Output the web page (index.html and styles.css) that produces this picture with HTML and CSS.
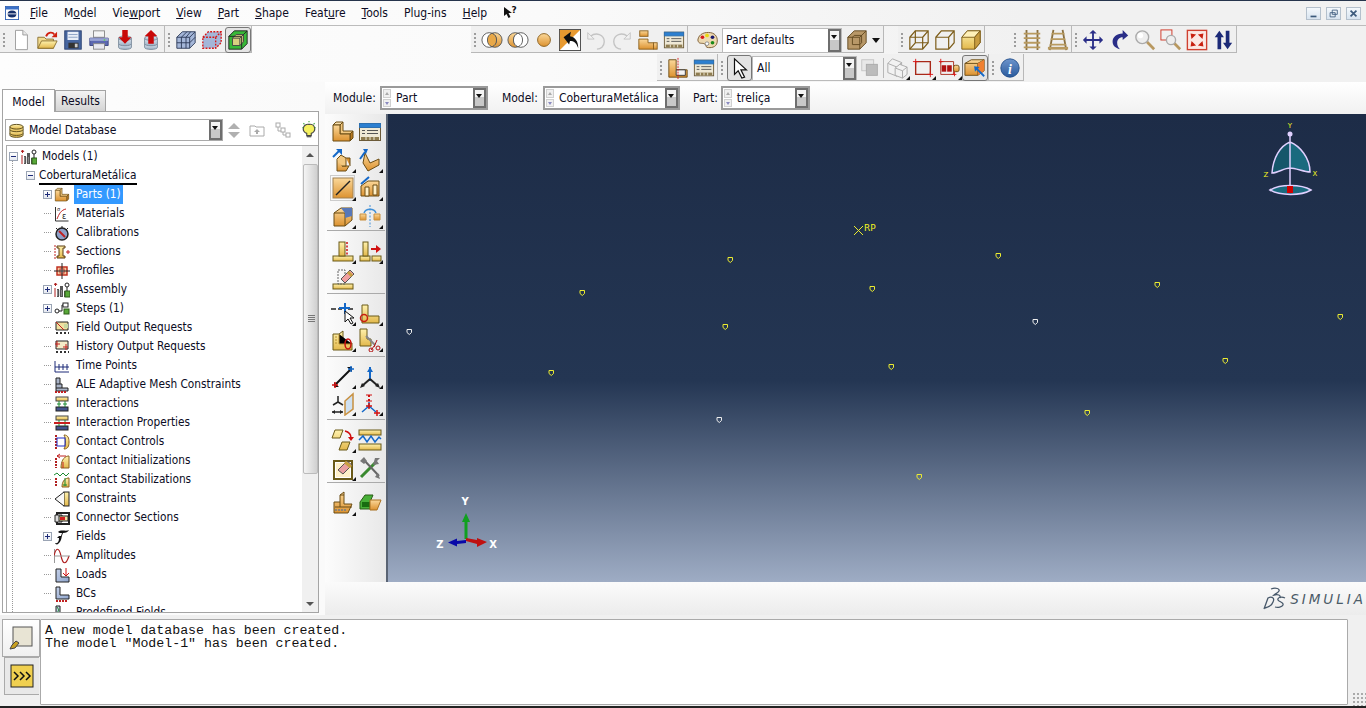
FILE: index.html
```html
<!DOCTYPE html>
<html lang="en">
<head>
<meta charset="utf-8">
<title>Abaqus/CAE</title>
<link rel="stylesheet" href="styles.css">
</head>
<body>
<svg class="defs" aria-hidden="true">
  <defs>
    <linearGradient id="o" x1="0" y1="0" x2="0" y2="1"><stop offset="0" stop-color="#fbd89a"/><stop offset="1" stop-color="#dc9230"/></linearGradient>
    <linearGradient id="y" x1="0" y1="0" x2="0" y2="1"><stop offset="0" stop-color="#fff2ae"/><stop offset="1" stop-color="#e2b84c"/></linearGradient>
    <linearGradient id="b" x1="0" y1="0" x2="1" y2="1"><stop offset="0" stop-color="#c6d2ea"/><stop offset="1" stop-color="#8ea4cc"/></linearGradient>
    <linearGradient id="c" x1="0" y1="0" x2="0" y2="1"><stop offset="0" stop-color="#e4ecf4"/><stop offset="1" stop-color="#9cb0c4"/></linearGradient>
    <linearGradient id="info" x1="0" y1="0" x2="0" y2="1"><stop offset="0" stop-color="#6c94cc"/><stop offset="1" stop-color="#2a5a9c"/></linearGradient>
    <symbol id="part" viewBox="0 0 24 24"><g stroke="#6a4c14" stroke-width="1" stroke-linejoin="round"><path d="M2 5l3-3h7l-3 3z" fill="#fbe3b0"/><path d="M9 5l3-3v9h10l-3 3H9z" fill="#f2c880"/><path d="M19 14l3-3v7l-3 3z" fill="#b87a24"/><path d="M2 5h7v9h10v7H2z" fill="url(#o)"/></g></symbol>
    <symbol id="table" viewBox="0 0 24 24"><rect x="1.500" y="3.500" width="21" height="17" fill="#efe9d6" stroke="#6b5a38"/><rect x="1.500" y="3.500" width="21" height="4" fill="#2c7fd0" stroke="#2c6fb0"/><path d="M4 10.500h3M9 10.500h11M4 13.500h3M9 13.500h11" stroke="#555"/><path d="M3 17h18v3H3z" fill="#8e7c50"/><path d="M8 17v3M12 17v3M16 17v3" stroke="#efe9d6"/></symbol>
    <symbol id="stack" viewBox="0 0 24 24"><g stroke="#7a8a9a" fill="url(#c)"><path d="M5 16v4c0 3 14 3 14 0v-4z"/><path d="M5 10v6c0 3 14 3 14 0v-6z"/><ellipse cx="12" cy="10" rx="7" ry="2.500"/></g></symbol>
    <symbol id="assy" viewBox="0 0 16 16"><path d="M1 6v9" stroke="#b02020"/><path d="M1.500 4l0-3M0 3l1.500-2 1.500 2" stroke="#b02020" fill="none"/><path d="M3 7h2v8H3zM6 4h3v11H6zM10 9h1v6h-1z" fill="#555"/><path d="M3 9h6M3 11h6M3 13h6" stroke="#bbb" stroke-dasharray="1 1"/><rect x="11" y="9" width="5" height="6" fill="#58a838" stroke="#2c5c18"/><circle cx="13" cy="3" r="2" fill="#fff" stroke="#222"/><path d="M13 5v4" stroke="#222"/></symbol>
    <path id="pin" d="M-2-1.500h4.500v3L.3 3.500-2 1.500z"/>
  </defs>
</svg>

<header class="menubar">
  <svg class="appicon" viewBox="0 0 16 16"><rect x=".5" y=".5" width="15" height="15" fill="#fff" stroke="#2a5cb0"/><rect x="1" y="1" width="14" height="3" fill="#3a70c8"/><ellipse cx="8" cy="9" rx="5" ry="4" fill="#16306c"/><path d="M3 9h10" stroke="#fff"/></svg>
  <nav class="menu">
    <span><u>F</u>ile</span><span>M<u>o</u>del</span><span>Vie<u>w</u>port</span><span><u>V</u>iew</span><span><u>P</u>art</span><span><u>S</u>hape</span><span>Feat<u>u</u>re</span><span><u>T</u>ools</span><span>Plu<u>g</u>-ins</span><span><u>H</u>elp</span>
  </nav>
  <svg class="whats" viewBox="0 0 14 14"><path d="M1 1v9l2.500-2L5.500 12l2-1-2-4H9z" fill="#111"/><text x="8.500" y="7" class="whats-q">?</text></svg>
  <div class="winbtns">
    <span class="winbtn"><svg viewBox="0 0 15 13"><rect x="4" y="9" width="7" height="2" fill="#3c5a7c"/></svg></span>
    <span class="winbtn"><svg viewBox="0 0 15 13"><path d="M6 2.500h6v5H6zM3.500 5.500h6v5h-6z" fill="none" stroke="#3c5a7c"/></svg></span>
    <span class="winbtn"><svg viewBox="0 0 15 13"><path d="M4 3l7 7M11 3l-7 7" stroke="#3c5a7c" stroke-width="2"/></svg></span>
  </div>
</header>

<section class="toolrow">
  <div class="tb">
    <span class="grip"></span>
    <span class="ic"><svg viewBox="0 0 24 24"><path d="M6 1.500h8l5 5v16H6z" fill="#fff" stroke="#999"/><path d="M14 1.500v5h5" fill="#e8e8e8" stroke="#999"/></svg></span>
    <span class="ic"><svg viewBox="0 0 24 24"><path d="M2 21V9h7l2 2h8v10z" fill="#f2dc90" stroke="#8a7030"/><path d="M2 21l4-8h17l-4 8z" fill="url(#y)" stroke="#8a7030"/><path d="M11 8c2-5 7-5 9-2" fill="none" stroke="#d02010" stroke-width="2"/><path d="M23 3v6h-6z" fill="#d02010"/></svg></span>
    <span class="ic"><svg viewBox="0 0 24 24"><rect x="3" y="2" width="18" height="20" fill="#46659e" stroke="#2a4070"/><rect x="6" y="3" width="12" height="9" fill="#e8eef8"/><path d="M7 6h10M7 9h10" stroke="#8aa0c4"/><rect x="7" y="15" width="11" height="6" fill="#333"/><rect x="14" y="16" width="3" height="4" fill="#ccc"/></svg></span>
    <span class="ic"><svg viewBox="0 0 24 24"><rect x="6" y="2" width="12" height="7" fill="#f4f4f4" stroke="#888"/><path d="M2 10h20v8H2z" fill="#5c68b0" stroke="#3a4480"/><path d="M2 10h20v3H2z" fill="#9aa4d4"/><rect x="6" y="16" width="12" height="6" fill="#e8e8f0" stroke="#888"/><circle cx="18" cy="12" r="1" fill="#6c6"/></svg></span>
    <span class="ic"><svg viewBox="0 0 24 24"><use href="#stack"/><path d="M9 1h6v8h4l-7 7-7-7h4z" fill="#c80808"/></svg></span>
    <span class="ic"><svg viewBox="0 0 24 24"><use href="#stack"/><path d="M12 1l7 7h-4v8H9V8H5z" fill="#c80808"/></svg></span>
  </div>
  <div class="tb">
    <span class="grip"></span>
    <span class="ic"><svg viewBox="0 0 24 24"><path d="M2 9l6-6h14v12l-6 6H2z" fill="#a4b6d8" stroke="#2c3a58"/><path d="M2 9h14v12M16 9l6-6M7 9v12M12 9v12M2 15h14M7 9l6-6M12 9l5-6M16 15l6-6" fill="none" stroke="#2c3a58"/></svg></span>
    <span class="ic"><svg viewBox="0 0 24 24"><path d="M2 9l6-6h14v12l-6 6H2z" fill="#a4b6d8"/><path d="M2 9h14v12H2zM2 9l6-6h14v12l-6 6M16 9l6-6" fill="none" stroke="#d81818" stroke-width="1.500" stroke-dasharray="2 1.500"/></svg></span>
    <span class="ic on"><svg viewBox="0 0 24 24"><path d="M2 8l6-6h14v14l-6 6H2z" fill="#38b838" stroke="#222"/><path d="M6 10l4-4h8v8l-4 4H6z" fill="#d8d080" stroke="#444"/><path d="M2 8h14v14M16 8l6-6" fill="none" stroke="#222"/><path d="M6 10h8v8M14 10l4-4" fill="none" stroke="#444"/></svg></span>
  </div>
  <div class="tb tb-mid">
    <span class="grip"></span>
    <span class="ic"><svg viewBox="0 0 24 24"><circle cx="15" cy="12" r="8" fill="url(#o)" stroke="#555"/><circle cx="9" cy="12" r="8" fill="#fff" stroke="#555"/><path d="M12 4.600a8 8 0 0 1 0 14.800a8 8 0 0 1 0-14.800z" fill="#e8a848" stroke="#555"/></svg></span>
    <span class="ic"><svg viewBox="0 0 24 24"><circle cx="9" cy="12" r="8" fill="url(#o)" stroke="#555"/><circle cx="15" cy="12" r="8" fill="#fff" stroke="#555" fill-opacity=".9"/><path d="M12 4.600a8 8 0 0 1 0 14.800a8 8 0 0 1 0-14.800z" fill="#fff" stroke="#555"/></svg></span>
    <span class="ic"><svg viewBox="0 0 24 24"><circle cx="12" cy="12" r="7" fill="url(#o)" stroke="#8a6020"/></svg></span>
    <span class="ic"><svg viewBox="0 0 24 24"><rect x="0.500" y="0.500" width="23" height="23" fill="#fff" stroke="#444"/><path d="M1 23V21L21 1h2z" fill="none"/><path d="M1 1h22L1 23z" fill="#e89a30"/><path d="M5 9l8-6-1 5c6 1 9 6 9 13-2-6-5-8-9-8l-1 4z" fill="#111"/></svg></span>
    <span class="ic"><svg viewBox="0 0 24 24"><path d="M6 8c6-5 15-2 15 6 0 5-4 8-8 8" fill="none" stroke="#c4c4c4" stroke-width="1.500"/><path d="M3 4v7h7z" fill="#f0f0f0" stroke="#c4c4c4"/></svg></span>
    <span class="ic"><svg viewBox="0 0 24 24"><path d="M18 8c-6-5-15-2-15 6 0 5 4 8 8 8" fill="none" stroke="#c4c4c4" stroke-width="1.500"/><path d="M21 4v7h-7z" fill="#f0f0f0" stroke="#c4c4c4"/></svg></span>
    <span class="ic"><svg viewBox="0 0 24 24"><rect x="3" y="2" width="9" height="6" fill="url(#o)" stroke="#8a6020"/><path d="M2 11h10v4h6v7H2z" fill="url(#o)" stroke="#8a6020"/><rect x="18" y="15" width="4" height="7" fill="url(#o)" stroke="#8a6020"/></svg></span>
    <span class="ic"><svg viewBox="0 0 24 24"><use href="#table"/></svg></span>
    <span class="sep"></span>
    <span class="ic ic-wide"><svg viewBox="0 0 24 24"><path d="M2 12C3 5 10 3 16 4c6 1 8 6 7 11-1 5-7 6-11 5-2-1-1-3-3-4-3-1-6 1-7-4z" fill="#ecd8b0" stroke="#7a5a30"/><circle cx="7" cy="9" r="2" fill="#d81818"/><circle cx="12" cy="7" r="2" fill="#e8d810"/><circle cx="18" cy="9" r="2" fill="#18186c"/><circle cx="18" cy="15" r="2" fill="#1a8a1a"/><circle cx="12" cy="16" r="2" fill="#fff" stroke="#888"/></svg></span>
    <div class="combo c-defaults"><span class="val">Part defaults</span><span class="drop"></span></div>
    <span class="ic ic-cube"><svg viewBox="0 0 24 24"><path d="M2 9l7-7h13v13l-7 7H2z" fill="#b89868" stroke="#604820"/><path d="M2 9h13v13M15 9l7-7M7 9l2-2h8v8l-2 2H7z" fill="none" stroke="#604820"/></svg></span>
    <span class="ddarrow"></span>
  </div>
  <div class="tb tb-r1">
    <span class="grip"></span>
    <span class="ic"><svg viewBox="0 0 24 24"><g fill="none" stroke="#7c5c18" stroke-width="1.300"><path d="M2 9l6-7h14v13l-6 7H2zM2 9h14v13M16 9l6-7"/><path d="M2 22l6-7h14M8 2v13"/></g></svg></span>
    <span class="ic"><svg viewBox="0 0 24 24"><g fill="none" stroke="#7c5c18" stroke-width="1.300"><path d="M2 9l6-7h14v13l-6 7H2zM2 9h14v13M16 9l6-7"/></g></svg></span>
    <span class="ic"><svg viewBox="0 0 24 24"><path d="M2 9l6-7h14v13l-6 7H2z" fill="url(#y)" stroke="#7c5c18"/><path d="M2 9l6-7h14l-6 7z" fill="#fff0b8" stroke="#7c5c18"/><path d="M16 9l6-7v13l-6 7z" fill="#c89c40" stroke="#7c5c18"/></svg></span>
  </div>
  <div class="tb tb-r2">
    <span class="grip"></span>
    <span class="ic"><svg viewBox="0 0 24 24"><path d="M6 1v22M18 1v22" stroke="#8a7040" stroke-width="2"/><path d="M3 5h18M3 10h18M3 15h18M3 20h18" stroke="#b89a60" stroke-width="2"/></svg></span>
    <span class="ic"><svg viewBox="0 0 24 24"><path d="M7 1L3 23M17 1l4 22" stroke="#8a7040" stroke-width="2"/><path d="M5 5h14M4 11h16M3 17h18" stroke="#b89a60" stroke-width="2"/><path d="M1 21h22" stroke="#b89a60" stroke-width="3"/></svg></span>
    <span class="sep"></span>
    <span class="grip"></span>
    <span class="ic"><svg viewBox="0 0 24 24"><path d="M12 1l4 4h-3v6h6V8l4 4-4 4v-3h-6v6h3l-4 4-4-4h3v-6H5v3l-4-4 4-4v3h6V5H8z" fill="#2a2e88"/></svg></span>
    <span class="ic"><svg viewBox="0 0 24 24"><path d="M16 1l6 6-6 5V9c-4 0-6 3-6 6 0 3 1 5 3 7-5-1-8-4-8-8 0-5 4-9 11-9z" fill="#2a2e88"/></svg></span>
    <span class="ic"><svg viewBox="0 0 24 24"><path d="M14 14l8 8" stroke="#b89860" stroke-width="3"/><circle cx="9" cy="9" r="7" fill="#eee" stroke="#aaa" stroke-width="1.500"/><circle cx="7" cy="7" r="3" fill="#fff"/></svg></span>
    <span class="ic"><svg viewBox="0 0 24 24"><rect x="1" y="1" width="12" height="11" fill="none" stroke="#d03020"/><path d="M15 15l7 7" stroke="#b89860" stroke-width="3"/><circle cx="12" cy="12" r="5" fill="#eee" stroke="#aaa" stroke-width="1.500"/></svg></span>
    <span class="ic"><svg viewBox="0 0 24 24"><rect x="1.500" y="1.500" width="21" height="21" fill="#fbe8e4" stroke="#d04030" stroke-width="1.500"/><path d="M5 5l6 1-5 5zM19 5l-6 1 5 5zM5 19l6-1-5-5zM19 19l-6-1 5-5z" fill="#c82010"/></svg></span>
    <span class="ic"><svg viewBox="0 0 24 24"><path d="M8 2l5 7h-3v13H6V9H3z" fill="#1c2a78"/><path d="M17 22l-5-7h3V2h4v13h3z" fill="#1c2a78"/></svg></span>
  </div>
</section>

<section class="toolrow row2">
  <div class="tb">
    <span class="grip"></span>
    <span class="ic"><svg viewBox="0 0 24 24"><path d="M2 3h8v11h12v8H2z" fill="url(#o)" stroke="#6a4c14"/><path d="M10 14h10v6H10z" fill="#f4f4f4" stroke="#333"/><path d="M12 1v23" stroke="#d81818" stroke-dasharray="2 1"/></svg></span>
    <span class="ic"><svg viewBox="0 0 24 24"><use href="#table"/></svg></span>
  </div>
  <div class="tb">
    <span class="grip"></span>
    <span class="ic on ic-sel"><svg viewBox="0 0 24 24"><path d="M6 2v17l4-4 4 8 3-1-4-8h6z" fill="#fff" stroke="#111" stroke-width="1.300"/></svg></span>
    <div class="combo c-all"><span class="val">All</span><span class="drop"></span></div>
    <span class="ic ic-copy"><svg viewBox="0 0 24 24"><rect x="3" y="3" width="13" height="12" fill="#e8e8e8" stroke="#c4c4c4"/><rect x="8" y="8" width="12" height="12" fill="#bcbcbc" stroke="#aaa"/></svg></span>
    <span class="sep sep-in"></span>
    <span class="ic fly"><svg viewBox="0 0 24 24"><g fill="#f2f2f2" stroke="#a8a8a8"><path d="M2 7l5-5 10 4v10l-5 5-10-4z"/><path d="M2 7l10 4v10M12 11l5-5"/><path d="M10 12l5-4 8 3v8l-5 4-8-3z"/><path d="M10 12l8 3v8M18 15l5-4"/></g></svg></span>
    <span class="ic fly"><svg viewBox="0 0 24 24"><path d="M4 5h16v14H4z" fill="none" stroke="#a82818" stroke-width="1.500"/><path d="M1 5h6M4 2v6M20 16v6M17 19h6" stroke="#d81818"/></svg></span>
    <span class="ic fly"><svg viewBox="0 0 24 24"><path d="M3 5h14v14H3z" fill="none" stroke="#a82818"/><rect x="4" y="9" width="5" height="7" fill="#b01010"/><rect x="10" y="9" width="5" height="7" fill="#b01010"/><rect x="17" y="9" width="6" height="7" rx="2" fill="url(#o)" stroke="#6a4c14"/><path d="M1 5h5M3 2v5M15 19h5M18 16v5" stroke="#d81818"/></svg></span>
    <span class="ic on ic-box"><svg viewBox="0 0 24 24"><path d="M1 7l7-4h14v12l-7 5H1z" fill="url(#o)" stroke="#6a4c14"/><path d="M1 7h14v13M15 7l7-4" fill="none" stroke="#6a4c14"/><path d="M15 7l7-4v12l-7 5z" fill="#f08030"/><path d="M22 21l-8-8" stroke="#1468c8" stroke-width="2"/><path d="M11 10l6 1-5 5z" fill="#1468c8"/></svg></span>
  </div>
  <div class="tb">
    <span class="grip"></span>
    <span class="ic"><svg viewBox="0 0 24 24"><circle cx="12" cy="12" r="10" fill="url(#info)" stroke="#24508c"/><text x="12" y="18" class="info-i">i</text></svg></span>
  </div>
</section>

<main class="main">
  <aside class="leftpane">
    <div class="tabs"><span class="tab active">Model</span><span class="tab">Results</span></div>
    <div class="panel">
      <div class="dbrow">
        <div class="combo c-db">
          <svg class="dbicon" viewBox="0 0 16 16"><g stroke="#5a4a18" fill="url(#y)"><path d="M1 11v2c0 3 14 3 14 0v-2z"/><path d="M1 7v4c0 3 14 3 14 0V7z"/><path d="M1 4v3c0 3 14 3 14 0V4z"/><ellipse cx="8" cy="4" rx="7" ry="2.500"/></g></svg>
          <span class="val">Model Database</span><span class="drop"></span>
        </div>
        <span class="updown"><i class="up"></i><i class="down"></i></span>
        <svg class="dbtool" viewBox="0 0 16 16"><path d="M1 4h5l1 1h8v9H1z" fill="none" stroke="#aaa"/><path d="M8 7l3 3H9v2H7v-2H5z" fill="#aaa"/></svg>
        <svg class="dbtool" viewBox="0 0 16 16"><g fill="#fff" stroke="#aaa"><rect x="1" y="1" width="4" height="4"/><rect x="6" y="6" width="4" height="4"/><rect x="11" y="11" width="4" height="4"/></g><path d="M3 5v4h3M8 10v3h3" fill="none" stroke="#aaa"/></svg>
        <svg class="dbtool bulb" viewBox="0 0 16 16"><path d="M8 3a4 4 0 0 0-2 8v2h4v-2a4 4 0 0 0-2-8z" fill="#f4f060" stroke="#444"/><path d="M6 14h4" stroke="#444"/><path d="M2 6h1M13 6h1M3 2l1 1M13 2l-1 1M8 0v1" stroke="#4a4"/></svg>
      </div>
      <div class="treebox">
        <div class="tree">
          <div class="row r0"><span class="exp minus"></span><svg class="ti" viewBox="0 0 16 16"><use href="#assy"/></svg><span class="lbl">Models (1)</span></div>
          <div class="row r1"><span class="exp minus"></span><span class="lbl cur">CoberturaMetálica</span></div>
          <div class="row r2"><span class="exp plus"></span><svg class="ti" viewBox="0 0 24 24"><use href="#part"/></svg><span class="lbl sel">Parts (1)</span></div>
          <div class="row r2"><span class="stub"></span><svg class="ti" viewBox="0 0 16 16"><path d="M1.500 1v14h13" fill="none" stroke="#333"/><path d="M3 13C5 8 7 4 12 3" fill="none" stroke="#c02020"/><text x="8" y="13" class="eps">ε</text><text x="3" y="5" class="sig">σ</text></svg><span class="lbl">Materials</span></div>
          <div class="row r2"><span class="stub"></span><svg class="ti" viewBox="0 0 16 16"><circle cx="8" cy="9" r="6" fill="#8ea0c8" stroke="#222" stroke-width="1.500"/><path d="M5 6l6 6" stroke="#c02020" stroke-width="2"/><path d="M8 1v2M2 3l2 2M14 3l-2 2" stroke="#222"/></svg><span class="lbl">Calibrations</span></div>
          <div class="row r2"><span class="stub"></span><svg class="ti" viewBox="0 0 16 16"><path d="M3 2h8v2H9v8h2v2H3v-2h2V4H3z" fill="url(#y)" stroke="#5a3a10"/><path d="M1 1v14" stroke="#c02020" stroke-dasharray="2 1"/><path d="M12 8h4M14 6v4" stroke="#c02020"/></svg><span class="lbl">Sections</span></div>
          <div class="row r2"><span class="stub"></span><svg class="ti" viewBox="0 0 16 16"><rect x="3" y="4" width="10" height="8" fill="#f4c8a0" stroke="#c03020" stroke-width="1.500"/><rect x="6" y="6" width="4" height="4" fill="#fff" stroke="#c03020"/><path d="M8 0v16M0 8h16" stroke="#222"/></svg><span class="lbl">Profiles</span></div>
          <div class="row r2"><span class="exp plus"></span><svg class="ti" viewBox="0 0 16 16"><use href="#assy"/></svg><span class="lbl">Assembly</span></div>
          <div class="row r2"><span class="exp plus"></span><svg class="ti" viewBox="0 0 16 16"><circle cx="3" cy="10" r="2" fill="#fff" stroke="#222"/><path d="M5 10h3V4h2" fill="none" stroke="#222"/><rect x="9" y="2" width="5" height="4" fill="#fff" stroke="#222"/><rect x="10" y="8" width="5" height="5" fill="#58a838" stroke="#2c5c18"/></svg><span class="lbl">Steps (1)</span></div>
          <div class="row r2"><span class="stub"></span><svg class="ti" viewBox="0 0 16 16"><path d="M2 2h12v8H2z" fill="#f0e0a0" stroke="#222"/><path d="M2 2l8 8" stroke="#c02020"/><path d="M10 4h4v4h-4z" fill="#c8d8a0"/><path d="M2 13h2M6 13h2M10 13h2M14 13h1" stroke="#333" stroke-width="2"/></svg><span class="lbl">Field Output Requests</span></div>
          <div class="row r2"><span class="stub"></span><svg class="ti" viewBox="0 0 16 16"><path d="M2 2h12v8H2z" fill="#f4ecc8" stroke="#222"/><path d="M1 5h5M3 2v6M9 8h5M12 5v6" stroke="#c02020"/><path d="M2 13h2M6 13h2M10 13h2M14 13h1" stroke="#333" stroke-width="2"/></svg><span class="lbl">History Output Requests</span></div>
          <div class="row r2"><span class="stub"></span><svg class="ti" viewBox="0 0 16 16"><path d="M1 3v11h14M1 9h14M5 6v6M9 6v6M13 6v6" fill="none" stroke="#1c2a78"/></svg><span class="lbl">Time Points</span></div>
          <div class="row r2"><span class="stub"></span><svg class="ti" viewBox="0 0 16 16"><path d="M2 1h4v6h2v4h6v3H2z" fill="#aab4c8" stroke="#222"/><path d="M2 7h4M8 11H2" stroke="#222"/><path d="M1 15h12" stroke="#c02020" stroke-dasharray="2 1" stroke-width="2"/></svg><span class="lbl">ALE Adaptive Mesh Constraints</span></div>
          <div class="row r2"><span class="stub"></span><svg class="ti" viewBox="0 0 16 16"><rect x="2" y="1" width="12" height="4" fill="url(#y)" stroke="#444"/><rect x="2" y="11" width="12" height="4" fill="#44548c" stroke="#222"/><path d="M5 5v6M11 5v6M3 8h4M9 8h4" stroke="#1a8a30"/></svg><span class="lbl">Interactions</span></div>
          <div class="row r2"><span class="stub"></span><svg class="ti" viewBox="0 0 16 16"><rect x="2" y="1" width="12" height="4" fill="url(#y)" stroke="#444"/><rect x="2" y="11" width="12" height="4" fill="#44548c" stroke="#222"/><path d="M5 5v6M11 5v6" stroke="#1a8a30"/><path d="M0 8h16" stroke="#c82020" stroke-width="2"/></svg><span class="lbl">Interaction Properties</span></div>
          <div class="row r2"><span class="stub"></span><svg class="ti" viewBox="0 0 16 16"><path d="M10 1c4 0 5 3 5 7s-1 7-5 7c2-4 2-10 0-14z" fill="url(#y)" stroke="#8a6020"/><path d="M2 1v14" stroke="#b02020" stroke-dasharray="2 1" stroke-width="2"/><rect x="3" y="4" width="8" height="8" fill="none" stroke="#2030c8"/></svg><span class="lbl">Contact Controls</span></div>
          <div class="row r2"><span class="stub"></span><svg class="ti" viewBox="0 0 16 16"><path d="M14 3c-5 1-7 6-7 12h8V3z" fill="url(#y)" stroke="#8a6020"/><path d="M2 5v10" stroke="#b02020" stroke-dasharray="2 1" stroke-width="2"/><path d="M9 9v6" stroke="#c02020"/><path d="M3 3h9M3 3l3-2M3 3l3 2" stroke="#c02020"/></svg><span class="lbl">Contact Initializations</span></div>
          <div class="row r2"><span class="stub"></span><svg class="ti" viewBox="0 0 16 16"><path d="M14 6c-4 1-6 4-6 9h7V6z" fill="url(#y)" stroke="#8a6020"/><path d="M2 6v9" stroke="#b02020" stroke-dasharray="2 1" stroke-width="2"/><path d="M0 3l3-2 3 3 3-3 3 3 3-3" fill="none" stroke="#1a8a30"/><path d="M11 6v8M9 13h4" stroke="#1a8a30"/></svg><span class="lbl">Contact Stabilizations</span></div>
          <div class="row r2"><span class="stub"></span><svg class="ti" viewBox="0 0 16 16"><rect x="10" y="1" width="5" height="14" fill="url(#y)" stroke="#222"/><path d="M10 1L1 8l9 7" fill="#f8f8f8" stroke="#222"/></svg><span class="lbl">Constraints</span></div>
          <div class="row r2"><span class="stub"></span><svg class="ti" viewBox="0 0 16 16"><path d="M3 3h12v11H3z" fill="none" stroke="#222" stroke-width="2"/><path d="M1 5v7h7V5z" fill="#ddd" stroke="#222"/><rect x="5" y="6" width="9" height="5" fill="#f0e0a0" stroke="#222"/><rect x="6" y="7" width="5" height="3" fill="#d02020"/></svg><span class="lbl">Connector Sections</span></div>
          <div class="row r2"><span class="exp plus"></span><svg class="ti" viewBox="0 0 16 16"><path d="M4 3c3-3 8 0 11-2-1 2-3 3-6 3-2 4-1 8-5 11-1 1-3 0-3-1 3 1 4-2 4-5H3l2-2h2l1-3c-2 0-3 0-4-1z" fill="#111"/></svg><span class="lbl">Fields</span></div>
          <div class="row r2"><span class="stub"></span><svg class="ti" viewBox="0 0 16 16"><path d="M0 1v14" stroke="#333"/><path d="M0 8c2-9 5-9 7 0s5 9 8 0" fill="none" stroke="#b02020" stroke-width="1.200"/><path d="M0 8h16" stroke="#999"/></svg><span class="lbl">Amplitudes</span></div>
          <div class="row r2"><span class="stub"></span><svg class="ti" viewBox="0 0 16 16"><path d="M2 2h5v8h8v5H2z" fill="url(#b)" stroke="#222"/><path d="M12 1v7M9 6l3 3 3-3" fill="none" stroke="#d01010"/></svg><span class="lbl">Loads</span></div>
          <div class="row r2"><span class="stub"></span><svg class="ti" viewBox="0 0 16 16"><path d="M2 1h4v8h9v4H2z" fill="url(#b)" stroke="#222"/><path d="M2 15h12" stroke="#c02020" stroke-dasharray="2 1" stroke-width="2"/></svg><span class="lbl">BCs</span></div>
          <div class="row r2"><span class="stub"></span><svg class="ti" viewBox="0 0 16 16"><path d="M2 1h4v8h9v4H2z" fill="url(#b)" stroke="#222"/><path d="M3 2l2 3-2 3" fill="none" stroke="#2a8a30"/></svg><span class="lbl">Predefined Fields</span></div>
        </div>
        <div class="scroll">
          <span class="sb-up"></span>
          <span class="sb-thumb"></span>
          <span class="sb-down"></span>
        </div>
      </div>
    </div>
  </aside>

  <section class="work">
    <div class="context">
      <label class="ctx-lbl">Module:</label>
      <div class="combo c-module"><span class="spin"><i></i><i></i></span><span class="val">Part</span><span class="drop"></span></div>
      <label class="ctx-lbl ctx-model">Model:</label>
      <div class="combo c-model"><span class="spin"><i></i><i></i></span><span class="val">CoberturaMetálica</span><span class="drop"></span></div>
      <label class="ctx-lbl ctx-part">Part:</label>
      <div class="combo c-part"><span class="spin"><i></i><i></i></span><span class="val">treliça</span><span class="drop"></span></div>
    </div>
    <div class="stage">
      <div class="toolbox">
        <div class="tg tg1">
          <span class="cell"><svg viewBox="0 0 24 24"><use href="#part"/></svg></span>
          <span class="cell"><svg viewBox="0 0 24 24"><use href="#table"/></svg></span>
          <span class="cell fly"><svg viewBox="0 0 24 24"><path d="M6 11h5v7h7l-3 5H6z" fill="url(#o)" stroke="#6a4c14"/><path d="M6 11l4-4 5 3v8h-4" fill="#f2c880" stroke="#6a4c14"/><path d="M15 10l4 0v8" fill="#d89030" stroke="#6a4c14"/><path d="M2 9l7-7" stroke="#1468c8" stroke-width="2"/><path d="M5 1h6v6z" fill="#1468c8"/></svg></span>
          <span class="cell fly"><svg viewBox="0 0 24 24"><path d="M7 5l5 10 9-4v6l-11 6-5-8z" fill="url(#o)" stroke="#6a4c14"/><path d="M2 11l5-7" stroke="#1468c8" stroke-width="2"/><path d="M5 1h5l-2 5z" fill="#1468c8"/></svg></span>
          <span class="cell fly on"><svg viewBox="0 0 24 24"><rect x="2" y="2" width="20" height="20" fill="url(#o)" stroke="#a08050"/><path d="M5 19L19 5" stroke="#222" stroke-width="1.500"/></svg></span>
          <span class="cell fly"><svg viewBox="0 0 24 24"><path d="M3 10l7-5h11v15H3z" fill="url(#o)" stroke="#6a4c14"/><path d="M7 11h4v9H7zM15 9h4v10h-4z" fill="#fff0c8" stroke="#6a4c14"/><path d="M3 8l8-7" stroke="#1468c8" stroke-width="2"/></svg></span>
          <span class="cell fly"><svg viewBox="0 0 24 24"><path d="M3 9l7-5h11v12l-7 6H3z" fill="url(#o)" stroke="#6a4c14"/><path d="M3 9h11v13M14 9l7-5" fill="none" stroke="#6a4c14"/><path d="M10 4h11v8l-7 2V9z" fill="#5878b8"/></svg></span>
          <span class="cell fly"><svg viewBox="0 0 24 24"><path d="M2 10h6v6H2zM16 10h6v6h-6z" fill="url(#o)" stroke="#c89040"/><path d="M12 1v22" stroke="#4090d8" stroke-dasharray="2 1.500"/><path d="M6 9c2-5 10-5 12 0" fill="none" stroke="#4090d8" stroke-width="1.500"/></svg></span>
        </div>
        <div class="tg tg2">
          <span class="cell fly"><svg viewBox="0 0 24 24"><rect x="2" y="17" width="20" height="5" fill="url(#y)" stroke="#6a5a18"/><rect x="8" y="3" width="6" height="14" fill="url(#y)" stroke="#6a5a18"/><path d="M16 3v14" stroke="#d01010" stroke-width="1.500" stroke-dasharray="2 1.500"/></svg></span>
          <span class="cell fly"><svg viewBox="0 0 24 24"><rect x="2" y="17" width="10" height="5" fill="url(#y)" stroke="#6a5a18"/><rect x="5" y="3" width="5" height="14" fill="url(#y)" stroke="#6a5a18"/><rect x="14" y="17" width="9" height="5" fill="url(#y)" stroke="#6a5a18"/><path d="M13 10h6" stroke="#d01010" stroke-width="2"/><path d="M18 6l5 4-5 4z" fill="#d01010"/></svg></span>
          <span class="cell"><svg viewBox="0 0 24 24"><rect x="2" y="17" width="20" height="5" fill="url(#y)" stroke="#6a5a18"/><rect x="7" y="3" width="7" height="14" fill="none" stroke="#666" stroke-dasharray="2 1"/><path d="M10 12l9-9 4 4-9 9z" fill="#f0a0a0" stroke="#555"/><path d="M17 5l4 4" stroke="#c8a040" stroke-width="3"/></svg></span>
        </div>
        <div class="tg tg3">
          <span class="cell fly"><svg viewBox="0 0 24 24"><path d="M0 7h11M17 7h7" stroke="#222" stroke-width="1.500" stroke-dasharray="5 2"/><path d="M14 1v11M8 6h11" stroke="#1468c8" stroke-width="2"/><path d="M14 9v11l3-3 3 5 2-1-3-5h4z" fill="#fff" stroke="#111"/></svg></span>
          <span class="cell fly"><svg viewBox="0 0 24 24"><path d="M4 3h6v11h11v7H4z" fill="url(#y)" stroke="#6a5a18"/><circle cx="6" cy="16" r="3.500" fill="none" stroke="#c82010" stroke-width="1.500"/></svg></span>
          <span class="cell fly"><svg viewBox="0 0 24 24"><path d="M2 6h6l4-3v12h9v7H2z" fill="url(#y)" stroke="#6a5a18"/><path d="M8 6v10h13M4 9h2M4 12h2M4 15h2" stroke="#b89030"/><ellipse cx="17" cy="16" rx="3" ry="5" fill="none" stroke="#c81010" stroke-width="1.500"/></svg></span>
          <span class="cell fly"><svg viewBox="0 0 24 24"><path d="M2 1h7v10h4v7H2z" fill="url(#y)" stroke="#6a5a18"/><path d="M8 8l9 9" stroke="#888" stroke-width="2"/><path d="M17 17l-4 5M19 12l-3 7" stroke="#b01010"/><circle cx="13" cy="22" r="2" fill="none" stroke="#b01010"/><circle cx="20" cy="20" r="2" fill="none" stroke="#b01010"/></svg></span>
        </div>
        <div class="tg tg4">
          <span class="cell fly"><svg viewBox="0 0 24 24"><path d="M5 19L19 5" stroke="#111" stroke-width="2"/><path d="M3 17v5h5zM21 7V2h-5z" fill="#111"/><path d="M1 20h6M4 17v6" stroke="#d01010" stroke-width="1.500"/><path d="M17 4h6M20 1v6" stroke="#1468c8" stroke-width="1.500"/></svg></span>
          <span class="cell fly"><svg viewBox="0 0 24 24"><path d="M12 2v14" stroke="#1468c8" stroke-width="2"/><path d="M9 7l3-5 3 5z" fill="#1468c8"/><path d="M12 14L4 21M12 14l8 7" stroke="#222" stroke-width="2"/><path d="M2 23l2-5 3 3zM22 23l-2-5-3 3z" fill="#222"/></svg></span>
          <span class="cell fly"><svg viewBox="0 0 24 24"><path d="M14 9l8-7v15l-8 6z" fill="#cfe0f0" stroke="#c89040" stroke-width="1.500"/><path d="M2 13l5-3M7 10v-6M7 10l5 3" stroke="#222" stroke-width="1.500"/><path d="M1 20h11" stroke="#222" stroke-width="1.500"/><path d="M1 20l3-2v4zM12 20l-3-2v4z" fill="#222"/></svg></span>
          <span class="cell fly"><svg viewBox="0 0 24 24"><path d="M11 3v6" stroke="#d01010" stroke-width="2" stroke-dasharray="2 2"/><path d="M8 3h6M8 9h6" stroke="#d01010"/><path d="M11 10v6M11 14l-7 6M11 14l7 6" stroke="#1468c8" stroke-width="1.500"/><path d="M8 14h6M11 11v6" stroke="#d01010" stroke-width="1.500"/><path d="M16 21h6M19 18v6" stroke="#d01010" stroke-width="1.500"/></svg></span>
        </div>
        <div class="tg tg5">
          <span class="cell fly"><svg viewBox="0 0 24 24"><path d="M4 2h8L9 10H1zM11 14h8l-3 8H8z" fill="url(#y)" stroke="#6a5a18"/><path d="M14 3c4 1 6 3 6 7" fill="none" stroke="#d01010" stroke-width="1.500"/><path d="M17 9h6l-3 4z" fill="#d01010"/></svg></span>
          <span class="cell"><svg viewBox="0 0 24 24"><rect x="1" y="2" width="22" height="5" fill="url(#y)" stroke="#6a5a18"/><rect x="1" y="16" width="22" height="6" fill="url(#y)" stroke="#6a5a18"/><path d="M1 12l4-4 4 6 4-6 4 6 4-5 2 2" fill="none" stroke="#1468c8" stroke-width="1.500"/></svg></span>
          <span class="cell fly"><svg viewBox="0 0 24 24"><rect x="3" y="5" width="18" height="18" fill="#fff" stroke="#6a5a18" stroke-width="2"/><path d="M5 7h14v14H5z" fill="#fff0c8"/><path d="M7 14l9-9 5 4-9 9z" fill="#e8a0a0" stroke="#555"/><path d="M14 6l6 5" stroke="#c8a040" stroke-width="3"/></svg></span>
          <span class="cell"><svg viewBox="0 0 24 24"><path d="M3 21L17 7" stroke="#3a8a30" stroke-width="3"/><path d="M5 3l16 17" stroke="#666" stroke-width="2"/><path d="M2 5l4-4 3 4-3 3zM22 23l-5-2 3-4z" fill="#777"/><path d="M15 9l2-7 5 0-3 3 2 3z" fill="#777"/></svg></span>
        </div>
        <div class="tg tg6">
          <span class="cell fly"><svg viewBox="0 0 24 24"><path d="M3 11h6V4l4-3v12h8l-4 9H3z" fill="url(#o)" stroke="#6a4c14"/><path d="M9 4h4M9 11v5h12M9 16l-5 0" fill="none" stroke="#6a4c14"/><path d="M4 19h12" stroke="#3868a8" stroke-dasharray="2 1"/></svg></span>
          <span class="cell"><svg viewBox="0 0 24 24"><path d="M2 11l5-7h8l-3 7v7H2z" fill="#48b038" stroke="#2a5c18"/><path d="M4 11h8v5H4z" fill="#186c10"/><path d="M12 9h11l-4 10H12z" fill="url(#o)" stroke="#a87020"/></svg></span>
        </div>
      </div>
      <div class="viewport">
        <svg class="scene" viewBox="388 114 978 468">
          <g class="pts">
            <use href="#pin" x="730" y="259"/><use href="#pin" x="582" y="292"/><use href="#pin" x="725" y="326"/><use href="#pin" x="551" y="372"/><use href="#pin" x="872" y="288"/><use href="#pin" x="998" y="255"/><use href="#pin" x="1157" y="284"/><use href="#pin" x="1340" y="316"/><use href="#pin" x="891" y="366"/><use href="#pin" x="1225" y="360"/><use href="#pin" x="1087" y="412"/><use href="#pin" x="919" y="476"/>
          </g>
          <g class="pts white">
            <use href="#pin" x="409" y="331"/><use href="#pin" x="719" y="419"/><use href="#pin" x="1035" y="321"/>
          </g>
          <path d="M854 226l9 9M863 226l-9 9" class="rp"/>
          <text x="864" y="231" class="ylab rp-t">RP</text>

          <path d="M1290 142c-10 4-18 16-18 31 6 0 12-5 18-5z" fill="#15566a"/>
          <path d="M1290 142c10 4 20 16 20 30-6 0-14-4-20-4z" fill="#1a6a7e"/>
          <path d="M1272 173c1-15 8-27 18-31 10 4 20 16 20 30-6 0-14-4-20-4-6 0-12 5-18 5zM1290 134v52" class="triad" fill="none"/>
          <path d="M1270 190c10-6 31-6 41 0-10 6-31 6-41 0z" fill="#1a6a7e" class="triad"/>
          <circle cx="1290" cy="134" r="2.500" fill="#e0d0ff"/>
          <rect x="1287" y="186" width="6" height="7" fill="#d00000"/>
          <text x="1290" y="128" class="ylab mini">Y</text>
          <text x="1266" y="177" class="ylab mini">Z</text>
          <text x="1315" y="176" class="ylab mini">X</text>

          <path d="M466 513l4 9h-2.500v17h-3v-17H462z" fill="#10a020"/>
          <path d="M466 540l-9 1v-2.500l-9 4 9 4V544l9-1z" fill="#0808a8"/>
          <path d="M466 538l11 2v-2l10 4-10 5v-3l-11-3z" fill="#c01010"/>
          <text x="465" y="505" class="axlab">Y</text>
          <text x="440" y="548" class="axlab">Z</text>
          <text x="493" y="548" class="axlab">X</text>
        </svg>
      </div>
    </div>
    <div class="footer">
      <svg class="ds" viewBox="0 0 24 24"><path d="M8 2c5-2 9 0 8 2-1 2-4 3-5 4 4-1 7 0 6 3" fill="none" stroke="#47586a" stroke-width="1.300"/><path d="M1 22l4-11c4-2 7 0 5 4-1 3-4 5-8 6" fill="none" stroke="#47586a" stroke-width="1.300"/><path d="M22 11c-4-2-8 0-7 2 1 2 6 2 5 5-1 2-5 3-8 2" fill="none" stroke="#47586a" stroke-width="1.300"/></svg>
      <span class="simulia">SIMULIA</span>
    </div>
  </section>
</main>

<footer class="msg">
  <div class="msgtabs">
    <span class="mtab active"><svg viewBox="0 0 24 24"><rect x="4" y="1" width="19" height="19" fill="#e8e4d4" stroke="#555"/><path d="M1 23l2-4 4-4 3 2-4 5z" fill="#c8a020" stroke="#444"/></svg></span>
    <span class="mtab"><svg viewBox="0 0 24 24"><rect x="1" y="1" width="22" height="22" fill="#f0d050" stroke="#222"/><path d="M4 8l4 4-4 4M10 8l4 4-4 4M16 8l4 4-4 4" fill="none" stroke="#111" stroke-width="1.500"/></svg></span>
  </div>
  <pre class="console">A new model database has been created.
The model "Model-1" has been created.</pre>
  <span class="resize"></span>
</footer>
</body>
</html>
```
FILE: styles.css
```css
* { box-sizing: border-box; }
html, body { margin: 0; padding: 0; }
body {
  width: 1366px; height: 708px; overflow: hidden;
  display: flex; flex-direction: column;
  background: #f0f0f0;
  border-top: 1px solid #26344c;
  border-bottom: 2px solid #222;
  font-family: "DejaVu Sans Condensed", "DejaVu Sans", sans-serif;
  font-size: 12px; color: #0c0c24;
}
.defs { width: 0; height: 0; position: absolute; }
svg { display: block; }

/* menu */
.menubar {
  height: 25px; flex: none; display: flex; align-items: center;
  border-bottom: 1px solid #bcbcbc;
  background: linear-gradient(90deg, #fdfdfd, #fafafa 40%, #f1f1f1 75%);
  padding-left: 5px;
}
.appicon { width: 14px; height: 14px; }
.menu { display: flex; margin-left: 11px; gap: 16px; font-size: 12px; }
.whats { width: 14px; height: 14px; margin-left: 16px; }
.whats-q { font: bold 9px "DejaVu Sans", sans-serif; fill: #111; }
.winbtns { margin-left: auto; display: flex; gap: 5px; padding-right: 5px; }
.winbtn { width: 15px; height: 13px; border: 1px solid #b4c0cc; background: linear-gradient(#f4f8fc, #d8e4f0); }
.winbtn svg { width: 13px; height: 11px; }

/* toolbars */
.toolrow {
  height: 28px; flex: none; display: flex;
  background: linear-gradient(90deg, #fdfdfd, #fafafa 40%, #f1f1f1 75%);
}
.tb {
  display: flex; align-items: center; height: 27px; background: #f0f0f0; padding-top: 2px;
  border-right: 1px solid #b8b8b8; border-bottom: 1px solid #b8b8b8;
}
.tb-mid { margin-left: 219px; }
.tb-r1 { margin-left: 14px; }
.tb-r2 { margin-left: 26px; }
.row2 { padding-left: 657px; }
.grip {
  width: 8px; height: 14px; flex: none;
  background: repeating-linear-gradient(#9c9c9c 0 2px, transparent 2px 4px) 3px 0 / 2px 100% no-repeat;
}
.ic { width: 26px; height: 26px; flex: none; display: flex; align-items: center; justify-content: center; position: relative; }
.ic svg { width: 22px; height: 22px; }
.ic.on { border: 1px solid #777; border-radius: 3px; background: #e4e4e4; }
.ic-wide { width: 34px; padding-left: 4px; }
.ic-cube { margin-left: 2px; }
.ic-sel { width: 25px; margin: 0 0 0 1px; background: #efefef; }
.ic-copy { width: 24px; margin-left: 1px; }
.ic-box { width: 26px; }
.sep { width: 1px; height: 27px; margin-top: -2px; background: #b8b8b8; flex: none; }
.sep-in { height: 20px; margin: 0 0 0 1px; }
.ddarrow { width: 0; height: 5px; border-top: 5px solid #111; border-left: 4px solid transparent; border-right: 4px solid transparent; }
.tb-mid .ddarrow { margin: 0 3px 0 2px; }
.fly { position: relative; }
.fly::after {
  content: ""; position: absolute; right: 0; bottom: 1px;
  border-left: 4px solid transparent; border-bottom: 4px solid #111;
}
.info-i { font: italic bold 15px "Liberation Serif", serif; fill: #fff; text-anchor: middle; }

/* combo */
.combo {
  display: flex; align-items: stretch; background: #fff; flex: none;
  border: 2px solid #9a9a9a; height: 24px;
}
.val { flex: 1; padding-left: 4px; line-height: 20px; white-space: nowrap; overflow: hidden; }
.drop {
  width: 13px; flex: none; border: 2px solid #6e6e6e; position: relative;
  background: linear-gradient(#f4f4f4 45%, #c8c8c8 45%);
}
.drop::after {
  content: ""; position: absolute; left: 1px; top: 4px;
  border-top: 4px solid #111; border-left: 3.500px solid transparent; border-right: 3.500px solid transparent;
}
.c-defaults { width: 120px; height: 25px; border: 1px solid #bbb; }
.c-defaults .val { padding-left: 3px; line-height: 23px; }
.c-all { width: 105px; height: 25px; border: 1px solid #bbb; }
.c-all .val { line-height: 23px; }
.c-db { width: 218px; height: 22px; border: 1px solid #aaa; align-items: center; padding-left: 2px; }
.c-db .val { padding-left: 4px; }
.c-db .drop { height: 20px; }
.dbicon { width: 17px; height: 15px; flex: none; }
.spin { width: 10px; flex: none; display: flex; flex-direction: column; gap: 1px; padding: 1px; }
.spin i { flex: 1; background: #f0f0f0; border: 1px solid #d0d0d0; position: relative; }
.spin i::after {
  content: ""; position: absolute; left: 1px; top: 2px;
  border-left: 2.500px solid transparent; border-right: 2.500px solid transparent;
  border-bottom: 3px solid #aaa;
}
.spin i + i::after { border-bottom: 0; border-top: 3px solid #8a8ac0; }
.c-module { width: 108px; margin-left: 4px; }
.c-model { width: 137px; margin-left: 5px; }
.c-part { width: 89px; margin-left: 3px; }

/* main */
.main { flex: none; height: 533px; display: grid; grid-template-columns: 325px 1fr; }
.leftpane {
  padding: 6px 0 0 2px;
  background: linear-gradient(90deg, #fdfdfd, #fafafa);
  display: flex; flex-direction: column; height: 533px;
}
.tabs { display: flex; height: 23px; align-items: flex-end; flex: none; }
.tab {
  width: 51px; height: 21px; border: 1px solid #a4a4a4; border-bottom: 0;
  background: linear-gradient(#f4f4f4, #d4d4d4); text-align: center; line-height: 20px;
}
.tab.active { width: 53px; height: 23px; background: #fff; line-height: 24px; margin-bottom: -1px; position: relative; z-index: 1; }
.panel {
  width: 317px; height: 502px; border: 1px solid #a4a4a4; background: #fff;
  padding: 7px 0 0 2px; display: flex; flex-direction: column;
}
.dbrow { display: flex; align-items: center; height: 22px; flex: none; }
.updown { width: 12px; flex: none; margin-left: 5px; margin-right: 9px; display: flex; flex-direction: column; gap: 3px; align-items: center; }
.updown i { width: 0; height: 0; border-left: 6px solid transparent; border-right: 6px solid transparent; }
.updown .up { border-bottom: 6px solid #b0b0b0; }
.updown .down { border-top: 6px solid #b0b0b0; }
.dbtool { width: 16px; height: 16px; margin-right: 10px; flex: none; }
.dbtool.bulb { margin-right: 0; margin-left: -1px; width: 18px; height: 18px; }
.treebox {
  margin: 4px 0 0 1px; flex: 1; min-height: 0; display: flex;
  border: 1px solid #ababab; border-bottom: 0; border-right: 0;
}
.tree {
  flex: 1; overflow: hidden; min-width: 0; padding-top: 1px;
  background: repeating-linear-gradient(#999 0 1px, transparent 1px 2px) 5px 15px / 1px 100% no-repeat;
}
.row { height: 19px; display: flex; align-items: center; white-space: nowrap; font-size: 11.750px; }
.r0 { padding-left: 2px; }
.r1 { padding-left: 19px; }
.r2 { padding-left: 36px; }
.exp {
  width: 9px; height: 9px; flex: none; border: 1px solid #9aa4b4;
  background: linear-gradient(#fff, #e4e8f0) ; position: relative;
}
.exp::before { content: ""; position: absolute; left: 1px; top: 3px; width: 5px; height: 1px; background: #1c2a78; }
.plus::after { content: ""; position: absolute; left: 3px; top: 1px; width: 1px; height: 5px; background: #1c2a78; }
.stub { width: 9px; height: 1px; flex: none; background: linear-gradient(90deg, #999 50%, transparent 50%) 5px 0 / 2px 1px repeat-x; }
.ti { width: 16px; height: 16px; margin-left: 2px; flex: none; }
.r0 .ti { margin-left: 3px; }
.lbl { margin-left: 4px; padding: 0 2px; line-height: 19px; }
.r0 .lbl { margin-left: 3px; }
.r1 .lbl { margin-left: 4px; padding: 0; line-height: 16px; border-bottom: 2px solid #000; }
.sel { background: #3399ff; color: #fff; }
.eps { font: 8px "DejaVu Sans", sans-serif; fill: #222; }
.sig { font: 5px "DejaVu Sans", sans-serif; fill: #222; }
.scroll {
  width: 16px; flex: none; display: flex; flex-direction: column; align-items: center;
  background: #f0f0f0;
}
.sb-up, .sb-down { flex: none; width: 0; height: 0; border-left: 4px solid transparent; border-right: 4px solid transparent; }
.sb-up { border-bottom: 4px solid #555; margin: 7px 0 7px; }
.sb-down { border-top: 4px solid #555; margin: auto 0 6px; }
.sb-thumb {
  width: 15px; height: 310px; flex: none; border: 1px solid #bbb; border-radius: 2px;
  background: repeating-linear-gradient(#777 0 1px, transparent 1px 2px) 4px 150px / 7px 7px no-repeat,
    linear-gradient(90deg, #f4f4f4, #d0d0d0);
}

/* right */
.work { display: flex; flex-direction: column; height: 533px; }
.context {
  height: 32px; flex: none; display: flex; align-items: center; padding: 0 0 0 8px;
  background: linear-gradient(#fff, #f1f1f1);
}
.ctx-model { margin-left: 14px; }
.ctx-part { margin-left: 13px; }
.stage { height: 468px; flex: none; display: flex; }
.toolbox {
  width: 63px; flex: none; background: linear-gradient(90deg, #fcfcfc, #e8e8e8);
  border-right: 2px solid #5a6474;
}
.tg {
  height: 63px; margin: 0 0 0 2px; width: 58px; border-bottom: 1px solid #aaa;
  display: grid; grid-template-columns: 27px 27px; grid-auto-rows: 28px; padding: 6px 0 0 2px;
}
.tg1 { height: 117px; padding-top: 4px; }
.tg3 { grid-auto-rows: 26px; padding-top: 7px; }
.tg4 { grid-auto-rows: 27px; }
.tg5 { padding-top: 6px; }
.tg6 { border-bottom: 0; padding-top: 6px; }
.cell { display: flex; align-items: center; justify-content: center; position: relative; }
.cell svg { width: 24px; height: 24px; }
.cell.on { outline: 1px solid #ccc; outline-offset: -2px; }
.viewport {
  flex: 1; min-width: 0;
  background: linear-gradient(#1d2c47 0, #243653 57%, #9eacc4 100%);
}
.scene { width: 978px; height: 468px; }
.pts { fill: none; stroke: #ecec30; stroke-width: 1; }
.pts.white { stroke: #eee; }
.rp { stroke: #ecec30; fill: none; }
.ylab { fill: #f4f420; font-family: "DejaVu Sans", sans-serif; }
.rp-t { font-size: 9px; }
.mini { font-size: 7px; text-anchor: middle; }
.triad { stroke: #e0d0ff; stroke-width: 1.500; }
.axlab { fill: #fff; font: bold 10px "DejaVu Sans", sans-serif; text-anchor: middle; }
.footer {
  height: 33px; flex: none; display: flex; align-items: center; justify-content: flex-end; padding-right: 0;
  background: linear-gradient(#fbfbfb, #ececec);
}
.ds { width: 24px; height: 24px; margin-right: 3px; }
.simulia { font: italic 13.500px "DejaVu Sans", sans-serif; letter-spacing: 3px; color: #4b5b68; }

/* message */
.msg { flex: 1; min-height: 0; display: flex; padding: 4px 0 0 2px; background: #f0f0f0; }
.msgtabs { width: 38px; flex: none; display: flex; flex-direction: column; }
.mtab { height: 38px; display: flex; align-items: center; justify-content: center; border: 1px solid #aaa; background: linear-gradient(#fff,#f0f0f0); }
.mtab svg { width: 24px; height: 24px; }
.mtab + .mtab { width: 35px; margin-left: 2px; border-right: 0; background: #e8e8e8; }
.console {
  width: 1308px; height: 86px; margin: 0; padding: 4px 4px; background: #fff;
  border: 1px solid #aaa; border-radius: 1px;
  font: 13.250px/13px "Liberation Mono", monospace; color: #111;
}
.resize {
  width: 14px; height: 14px; margin: auto 0 0 4px;
  background: radial-gradient(circle, #aaa 1px, transparent 1.200px) 0 0 / 4px 4px;
}
```
